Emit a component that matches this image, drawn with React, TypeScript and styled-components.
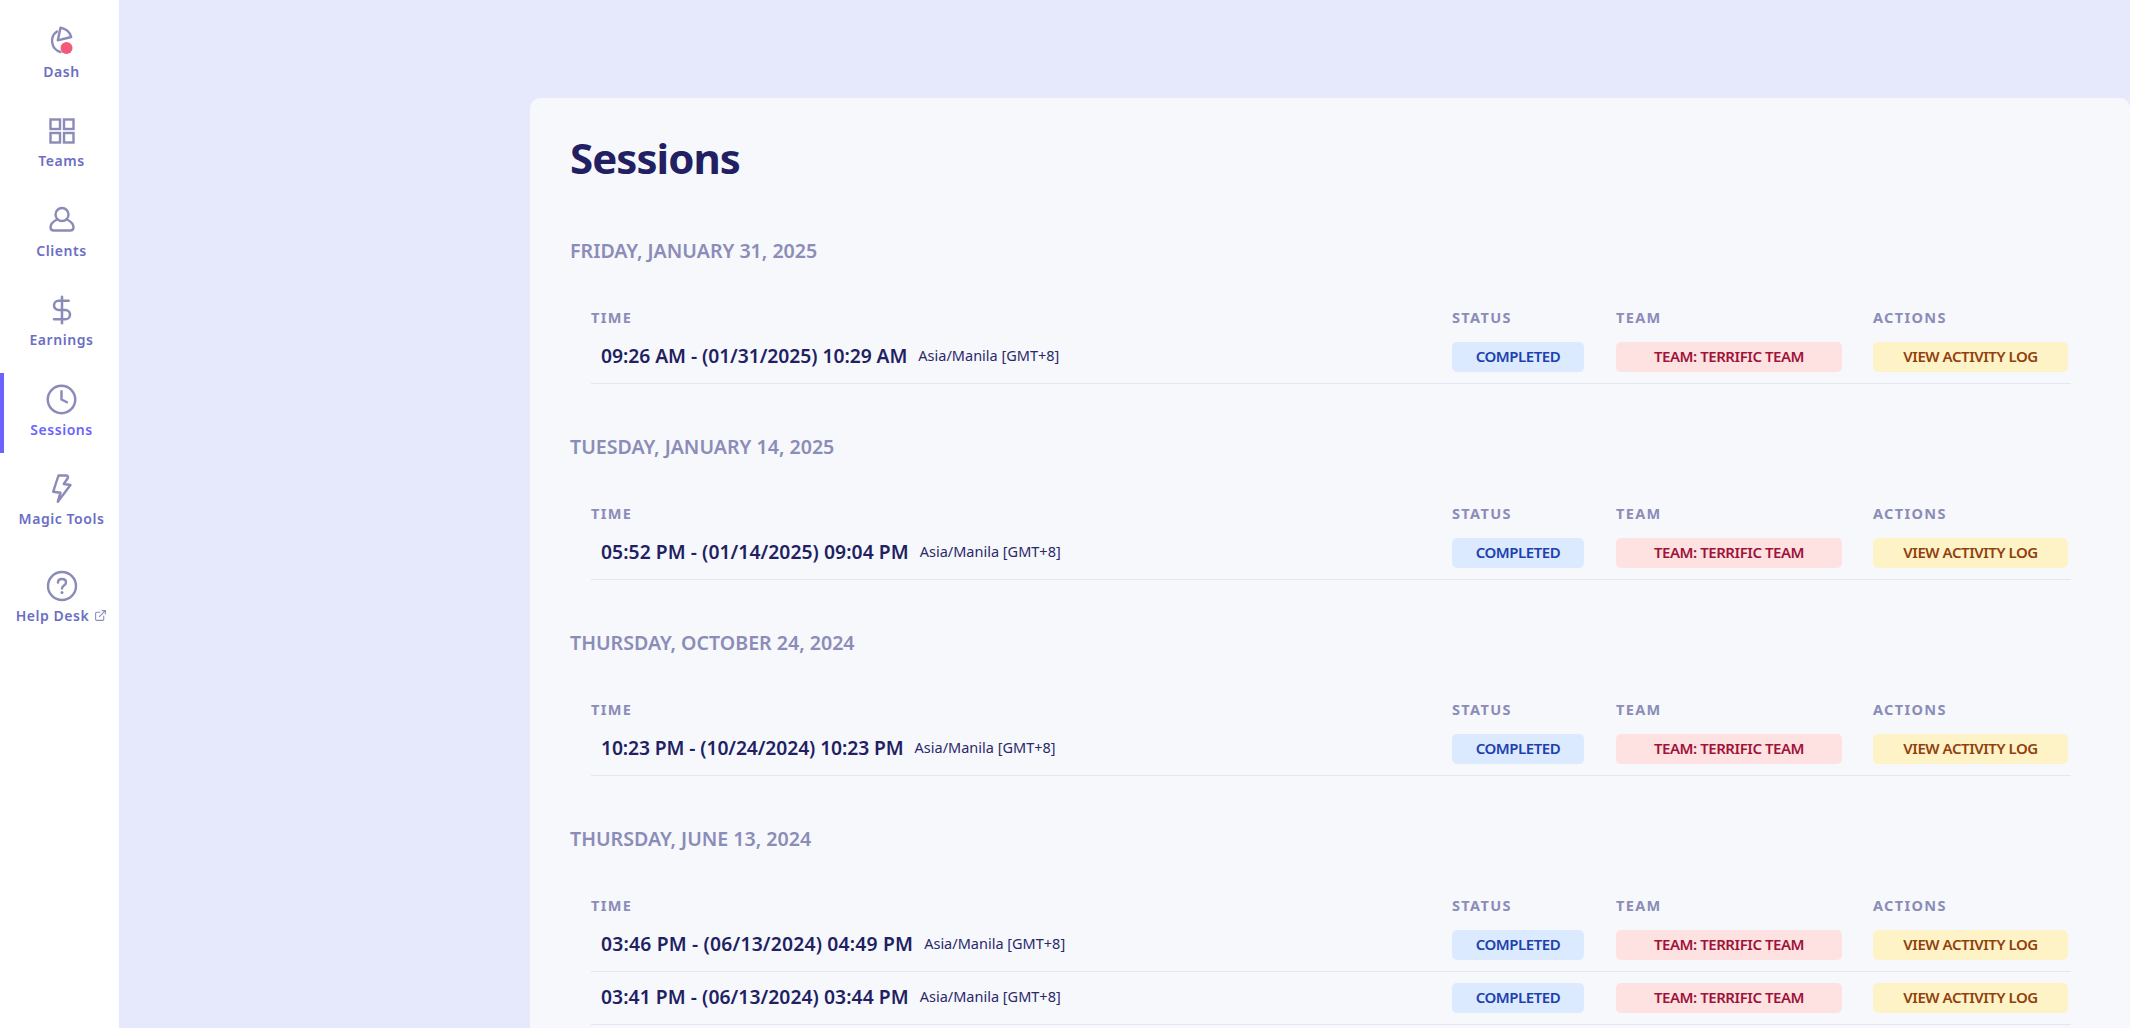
import React from 'react';
import styled, { createGlobalStyle } from 'styled-components';
import { Clock, DollarSign, ExternalLink } from 'lucide-react';

const GlobalStyle = createGlobalStyle`
  html, body {
    margin: 0;
    height: 100%;
    overflow: hidden;
  }
  body {
    background: #e6e9fb;
    font-family: "Noto Sans", "Open Sans", sans-serif;
  }
`;

const Page = styled.div`
  display: flex;
  height: 100vh;
  overflow: hidden;
`;

const Sidebar = styled.nav`
  flex: 0 0 119px;
  background: #ffffff;
  padding-top: 15px;
  display: flex;
  flex-direction: column;
  gap: 9.6px;
`;

const NavItem = styled.a<{ $active?: boolean; $tall?: boolean }>`
  height: ${({ $tall }) => ($tall ? '92px' : '80px')};
  margin-top: ${({ $tall }) => ($tall ? '1px' : '0')};
  padding-bottom: 2px;
  box-sizing: border-box;
  border-left: 4px solid ${({ $active }) => ($active ? '#6c63ff' : 'transparent')};
  border-radius: 0 6px 6px 0;
  display: flex;
  flex-direction: column;
  align-items: center;
  justify-content: center;
  color: ${({ $active }) => ($active ? '#6c63ff' : '#6b6ec4')};
`;

const NavIcon = styled.span`
  height: 34px;
  display: flex;
  align-items: center;
  justify-content: center;
  color: #8a8bb8;
`;

const NavLabel = styled.span`
  height: 26px;
  display: flex;
  align-items: center;
  gap: 5px;
  font-size: 14px;
  font-weight: 600;
  letter-spacing: 0.55px;
  white-space: nowrap;
`;

const Main = styled.main`
  flex: 1;
  padding: 98px 0 0 411px;
  min-width: 0;
`;

const Card = styled.section`
  background: #f6f8fc;
  border-radius: 10px 10px 0 0;
  padding: 26px 60px 0 40px;
  min-height: 1000px;
`;

const Title = styled.h1`
  margin: 0;
  height: 68px;
  line-height: 68px;
  font-size: 42px;
  font-weight: 700;
  color: #221f63;
  letter-spacing: -0.95px;
`;

const Group = styled.div`
  height: 196px;
  padding-top: 43px;
  box-sizing: border-box;
  &:last-child {
    height: auto;
  }
`;

const DateTitle = styled.h2`
  margin: 0 0 40px;
  height: 30px;
  line-height: 31px;
  font-size: 19.6px;
  font-weight: 600;
  color: #8b8cb8;
  text-transform: uppercase;
`;

const Table = styled.div`
  margin-left: 21px;
  display: grid;
  grid-template-columns: 861px 164px 257px 198px;
`;

const HeadCell = styled.div`
  height: 26px;
  line-height: 24px;
  font-size: 14.5px;
  font-weight: 700;
  letter-spacing: 1.35px;
  color: #8b8cb8;
  text-transform: uppercase;
`;

const Cell = styled.div`
  height: 53px;
  box-sizing: border-box;
  border-bottom: 1px solid #e4e6f0;
  display: flex;
  align-items: center;
  padding-bottom: 1px;
`;

const TimeCell = styled(Cell)`
  padding-left: 10px;
  padding-bottom: 4px;
  gap: 11px;
`;

const TimeRange = styled.span<{ $tracking: number }>`
  font-size: 19.3px;
  font-weight: 600;
  letter-spacing: ${({ $tracking }) => $tracking}px;
  color: #221f63;
  white-space: nowrap;
`;

const Zone = styled.span`
  font-size: 14.5px;
  color: #2b2869;
  white-space: nowrap;
`;

const tones = {
  blue: { bg: '#dbeafe', fg: '#1e40af' },
  red: { bg: '#fee2e2', fg: '#9f1239' },
  yellow: { bg: '#fef3c7', fg: '#92400e' },
};

const Chip = styled.span<{ $tone: keyof typeof tones; $width: number }>`
  width: ${({ $width }) => $width}px;
  height: 30px;
  box-sizing: border-box;
  padding-bottom: 2px;
  border-radius: 5px;
  display: flex;
  align-items: center;
  justify-content: center;
  font-size: 15px;
  font-weight: 600;
  letter-spacing: -0.45px;
  background: ${({ $tone }) => tones[$tone].bg};
  color: ${({ $tone }) => tones[$tone].fg};
  white-space: nowrap;
`;

const stroke = {
  fill: 'none',
  stroke: 'currentColor',
  strokeWidth: 2.4,
  strokeLinecap: 'round' as const,
  strokeLinejoin: 'round' as const,
};

const DashIcon = () => (
  <svg width="32" height="32" viewBox="0 0 32 32">
    <g {...stroke}>
      <path d="M11 6.5A11.5 11.5 0 0 0 14.5 27" />
      <path d="M14.5 2.7C19.5 3.5 24 7 25.2 12L11.8 15.3Z" />
    </g>
    <circle cx="20.5" cy="23" r="6" fill="#f4587a" />
  </svg>
);

const TeamsIcon = () => (
  <svg width="28" height="28" viewBox="0 0 28 28">
    <g {...stroke} strokeLinecap="butt" strokeLinejoin="miter">
      <rect x="2.5" y="2.5" width="9.5" height="9.5" />
      <rect x="16" y="2.5" width="9.5" height="9.5" />
      <rect x="2.5" y="16" width="9.5" height="9.5" />
      <rect x="16" y="16" width="9.5" height="9.5" />
    </g>
  </svg>
);

const ClientsIcon = () => (
  <svg width="28" height="28" viewBox="0 0 28 28">
    <g {...stroke}>
      <circle cx="14" cy="8.5" r="6.5" />
      <path d="M9 13.5C6 15 2.5 17.5 2.5 21.5 2.5 24 4 24.5 6 24.5H22C24 24.5 25.5 24 25.5 21.5 25.5 17.5 22 15 19 13.5" />
    </g>
  </svg>
);

const MagicIcon = () => (
  <svg width="28" height="32" viewBox="0 0 28 32">
    <path
      d="M10.5 2.5H18.5C20 2.5 20.3 4 19.8 5L15.8 11 22.5 12 9.8 28.7 12.5 19.7 5.2 18.7Z"
      {...stroke}
    />
  </svg>
);

const HelpIcon = () => (
  <svg width="32" height="32" viewBox="0 0 32 32">
    <circle cx="16" cy="16" r="14" {...stroke} />
    <path d="M12 12.5C12 10 14 9 16 9 18.2 9 20 10.3 20 12.4 20 15.4 16 15.4 16 18.5" {...stroke} />
    <circle cx="16" cy="22.5" r="1.5" fill="currentColor" />
  </svg>
);

type Session = { range: string; tracking: number };

const days: { date: string; sessions: Session[] }[] = [
  { date: 'Friday, January 31, 2025', sessions: [{ range: '09:26 AM - (01/31/2025) 10:29 AM', tracking: -0.05 }] },
  { date: 'Tuesday, January 14, 2025', sessions: [{ range: '05:52 PM - (01/14/2025) 09:04 PM', tracking: 0.06 }] },
  { date: 'Thursday, October 24, 2024', sessions: [{ range: '10:23 PM - (10/24/2024) 10:23 PM', tracking: -0.1 }] },
  {
    date: 'Thursday, June 13, 2024',
    sessions: [
      { range: '03:46 PM - (06/13/2024) 04:49 PM', tracking: 0.2 },
      { range: '03:41 PM - (06/13/2024) 03:44 PM', tracking: 0.06 },
    ],
  },
];

export default function App() {
  return (
    <>
      <GlobalStyle />
      <Page>
        <Sidebar>
          <NavItem>
            <NavIcon><DashIcon /></NavIcon>
            <NavLabel>Dash</NavLabel>
          </NavItem>
          <NavItem>
            <NavIcon><TeamsIcon /></NavIcon>
            <NavLabel>Teams</NavLabel>
          </NavItem>
          <NavItem>
            <NavIcon><ClientsIcon /></NavIcon>
            <NavLabel>Clients</NavLabel>
          </NavItem>
          <NavItem>
            <NavIcon><DollarSign size={32} strokeWidth={1.9} /></NavIcon>
            <NavLabel>Earnings</NavLabel>
          </NavItem>
          <NavItem $active>
            <NavIcon><Clock size={33} strokeWidth={1.8} /></NavIcon>
            <NavLabel>Sessions</NavLabel>
          </NavItem>
          <NavItem>
            <NavIcon><MagicIcon /></NavIcon>
            <NavLabel>Magic Tools</NavLabel>
          </NavItem>
          <NavItem $tall>
            <NavIcon><HelpIcon /></NavIcon>
            <NavLabel>
              Help Desk
              <ExternalLink size={13} color="#8a8bb8" />
            </NavLabel>
          </NavItem>
        </Sidebar>
        <Main>
          <Card>
            <Title>Sessions</Title>
            {days.map((day) => (
              <Group key={day.date}>
                <DateTitle>{day.date}</DateTitle>
                <Table>
                  <HeadCell>Time</HeadCell>
                  <HeadCell>Status</HeadCell>
                  <HeadCell>Team</HeadCell>
                  <HeadCell>Actions</HeadCell>
                  {day.sessions.map((s) => (
                    <React.Fragment key={s.range}>
                      <TimeCell>
                        <TimeRange $tracking={s.tracking}>{s.range}</TimeRange>
                        <Zone>Asia/Manila [GMT+8]</Zone>
                      </TimeCell>
                      <Cell><Chip $tone="blue" $width={132}>COMPLETED</Chip></Cell>
                      <Cell><Chip $tone="red" $width={226}>TEAM: TERRIFIC TEAM</Chip></Cell>
                      <Cell><Chip $tone="yellow" $width={195}>VIEW ACTIVITY LOG</Chip></Cell>
                    </React.Fragment>
                  ))}
                </Table>
              </Group>
            ))}
          </Card>
        </Main>
      </Page>
    </>
  );
}
